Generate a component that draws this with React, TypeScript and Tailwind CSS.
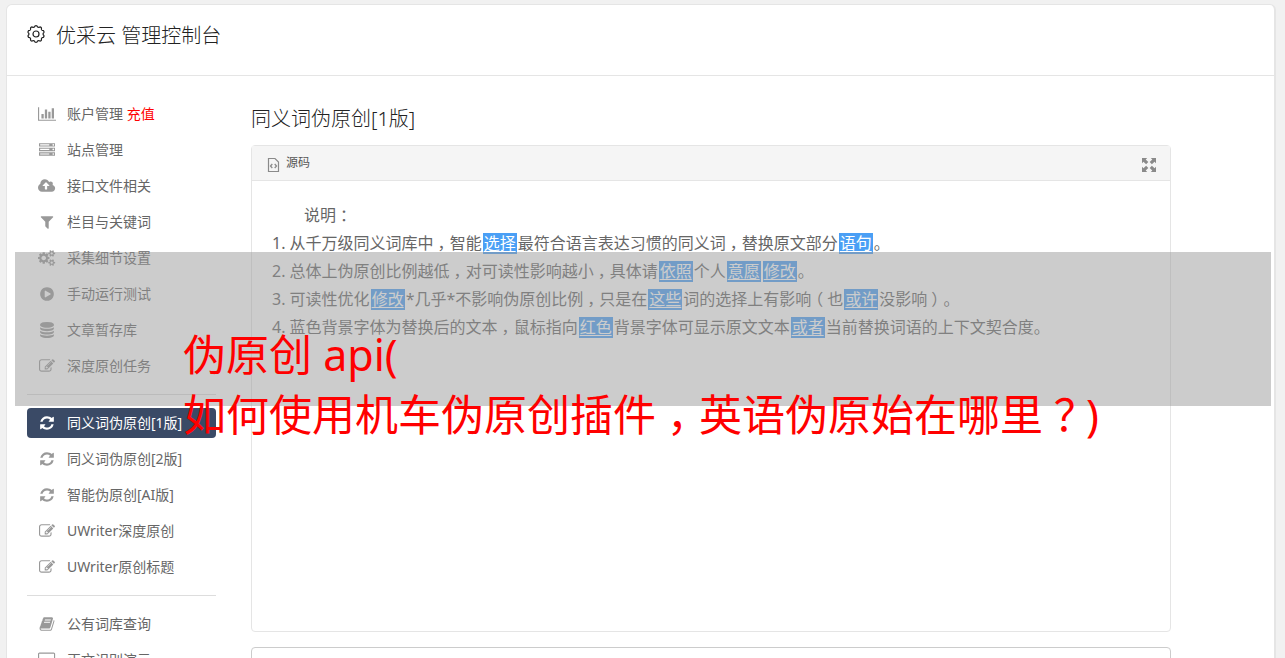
import React from "react";

type IconDef = { w: number; d: string };

const ICONS: Record<string, IconDef> = {
  chart: {
    w: 2048,
    d: "M640 896v512h-256v-512h256zm384-512v1024h-256v-1024h256zm1024 1152v128h-2048v-1536h128v1408h1920zm-640-896v768h-256v-768h256zm384-384v1152h-256v-1152h256z",
  },
  server: {
    w: 1792,
    d: "M128 1408h1024v-128h-1024v128zm0-512h1024v-128h-1024v128zm1568 448q0-40-28-68t-68-28-68 28-28 68 28 68 68 28 68-28 28-68zm-1568-960h1024v-128h-1024v128zm1568 448q0-40-28-68t-68-28-68 28-28 68 28 68 68 28 68-28 28-68zm0-512q0-40-28-68t-68-28-68 28-28 68 28 68 68 28 68-28 28-68zm96 832v384h-1792v-384h1792zm0-512v384h-1792v-384h1792zm0-512v384h-1792v-384h1792z",
  },
  cloud: {
    w: 1920,
    d: "M1280 864q0-14-9-23l-352-352q-9-9-23-9t-23 9l-351 351q-10 12-10 24 0 14 9 23t23 9h224v352q0 13 9.5 22.5t22.5 9.5h192q13 0 22.5-9.5t9.5-22.5v-352h224q13 0 22.5-9.5t9.5-22.5zm640 288q0 159-112.5 271.500t-271.500 112.500h-1088q-185 0-316.500-131.500t-131.500-316.500q0-130 70-240t188-165q-2-30-2-43 0-212 150-362t362-150q156 0 285.500 87t188.500 231q71-62 166-62 106 0 181 75t75 181q0 76-41 138 130 31 213.500 135.500t83.500 238.500z",
  },
  filter: {
    w: 1792,
    d: "M1595 295q17 41-14 70l-493 493v742q0 42-39 59-13 5-25 5-27 0-45-19l-256-256q-19-19-19-45v-486l-493-493q-31-29-14-70 17-39 59-39h1280q42 0 59 39z",
  },
  cogs: {
    w: 1920,
    d: "M896 896q0-106-75-181t-181-75-181 75-75 181 75 181 181 75 181-75 75-181zm768 512q0-52-38-90t-90-38-90 38-38 90q0 53 37.5 90.5t90.5 37.5 90.5-37.5 37.5-90.5zm0-1024q0-52-38-90t-90-38-90 38-38 90q0 53 37.5 90.5t90.5 37.5 90.5-37.5 37.5-90.5zm-384 421v185q0 10-7 19.5t-16 10.5l-155 24q-11 35-32 76 34 48 90 115 7 11 7 20 0 12-7 19-23 30-82.5 89.5t-78.5 59.5q-11 0-21-7l-115-90q-37 19-77 31-11 108-23 155-7 24-30 24h-186q-11 0-20-7.5t-10-17.5l-23-153q-34-10-75-31l-118 89q-7 7-20 7-11 0-21-8-144-133-144-160 0-9 7-19 10-14 41-53t47-61q-23-44-35-82l-152-24q-10-1-17-9.5t-7-19.5v-185q0-10 7-19.5t16-10.5l155-24q11-35 32-76-34-48-90-115-7-11-7-20 0-12 7-20 22-30 82-89t79-59q11 0 21 7l115 90q34-18 77-32 11-108 23-154 7-24 30-24h186q11 0 20 7.5t10 17.5l23 153q34 10 75 31l118-89q8-7 20-7 11 0 21 8 144 133 144 160 0 8-7 19-12 16-42 54t-45 60q23 48 34 82l152 23q10 2 17 10.5t7 19.5zm640 533v140q0 16-149 31-12 27-30 52 51 113 51 138 0 4-4 7-122 71-124 71-8 0-46-47t-52-68q-20 2-30 2t-30-2q-14 21-52 68t-46 47q-2 0-124-71-4-3-4-7 0-25 51-138-18-25-30-52-149-15-149-31v-140q0-16 149-31 13-29 30-52-51-113-51-138 0-4 4-7 4-2 35-20t59-34 30-16q8 0 46 46.5t52 67.5q20-2 30-2t30 2q51-71 92-112l6-2q4 0 124 70 4 3 4 7 0 25-51 138 17 23 30 52 149 15 149 31zm0-1024v140q0 16-149 31-12 27-30 52 51 113 51 138 0 4-4 7-122 71-124 71-8 0-46-47t-52-68q-20 2-30 2t-30-2q-14 21-52 68t-46 47q-2 0-124-71-4-3-4-7 0-25 51-138-18-25-30-52-149-15-149-31v-140q0-16 149-31 13-29 30-52-51-113-51-138 0-4 4-7 4-2 35-20t59-34 30-16q8 0 46 46.5t52 67.5q20-2 30-2t30 2q51-71 92-112l6-2q4 0 124 70 4 3 4 7 0 25-51 138 17 23 30 52 149 15 149 31z",
  },
  play: {
    w: 1792,
    d: "M896 128q209 0 385.5 103t279.5 279.5 103 385.5-103 385.5-279.5 279.5-385.5 103-385.5-103-279.5-279.5-103-385.5 103-385.5 279.5-279.5 385.5-103zm384 823q32-18 32-55t-32-55l-544-320q-31-19-64-1-32 19-32 56v640q0 37 32 56 16 8 32 8 17 0 32-9z",
  },
  database: {
    w: 1792,
    d: "M896 768q237 0 443-43t325-127v170q0 69-103 128t-280 93.5-385 34.5-385-34.5-280-93.5-103-128v-170q119 84 325 127t443 43zm0 768q237 0 443-43t325-127v170q0 69-103 128t-280 93.5-385 34.5-385-34.5-280-93.5-103-128v-170q119 84 325 127t443 43zm0-384q237 0 443-43t325-127v170q0 69-103 128t-280 93.5-385 34.5-385-34.5-280-93.5-103-128v-170q119 84 325 127t443 43zm0-1152q208 0 385 34.5t280 93.5 103 128v128q0 69-103 128t-280 93.5-385 34.5-385-34.5-280-93.5-103-128v-128q0-69 103-128t280-93.5 385-34.5z",
  },
  edit: {
    w: 1792,
    d: "M888 1184l116-116-152-152-116 116v56h96v96h56zm440-720q-16-16-33 1l-350 350q-17 17-1 33t33-1l350-350q17-17 1-33zm80 594v190q0 119-84.5 203.5t-203.5 84.5h-832q-119 0-203.5-84.5t-84.5-203.5v-832q0-119 84.5-203.5t203.5-84.5h832q63 0 117 25 15 7 18 23 3 17-9 29l-49 49q-14 14-32 8-23-6-45-6h-832q-66 0-113 47t-47 113v832q0 66 47 113t113 47h832q66 0 113-47t47-113v-126q0-13 9-22l64-64q15-15 35-7t20 29zm-96-738l288 288-672 672h-288v-288zm444 132l-92 92-288-288 92-92q28-28 68-28t68 28l152 152q28 28 28 68t-28 68z",
  },
  refresh: {
    w: 1792,
    d: "M1639 1056q0 5-1 7-64 268-268 434.5t-478 166.5q-146 0-282.5-55t-243.5-157l-129 129q-19 19-45 19t-45-19-19-45v-448q0-26 19-45t45-19h448q26 0 45 19t19 45-19 45l-137 137q71 66 161 102t187 36q134 0 250-65t186-179q11-17 53-117 8-23 30-23h192q13 0 22.5 9.5t9.5 22.5zm25-800v448q0 26-19 45t-45 19h-448q-26 0-45-19t-19-45 19-45l138-138q-148-137-349-137-134 0-250 65t-186 179q-11 17-53 117-8 23-30 23h-199q-13 0-22.5-9.5t-9.5-22.5v-7q65-268 270-434.5t480-166.5q146 0 284 55.5t245 156.5l130-129q19-19 45-19t45 19 19 45z",
  },
  book: {
    w: 1792,
    d: "M1703 478q40 57 18 129l-275 906q-19 64-76.5 107.5t-122.5 43.5h-923q-77 0-148.5-53.5t-99.5-131.5q-24-67-2-127 0-4 3-27t4-37q1-8-3-21.5t-3-19.5q2-11 8-21t16.5-23.5 16.5-23.5q23-38 45-91.5t30-91.5q3-10 .5-30t-.5-28q3-11 17-28t17-23q21-36 42-92t25-90q1-9-2.5-32t.5-28q4-13 22-30.5t22-22.5q19-26 42.5-84.5t27.5-96.5q1-8-3-25.5t-2-26.5q2-8 9-18t18-23 17-21q8-12 16.5-30.5t15-35 16-36 19.5-32 26.5-23.5 36-11.5 47.500 5.500l-1 3q38-9 51-9h761q74 0 114 56t18 130l-274 906q-36 119-71.5 153.5t-128.5 34.5h-869q-27 0-38 15-11 16-1 43 24 70 144 70h923q29 0 56-15.5t35-41.5l300-987q7-22 5-57 38 15 59 43zm-1064 2q-4 13 2 22.5t20 9.5h608q13 0 25.5-9.5t16.5-22.5l21-64q4-13-2-22.5t-20-9.5h-608q-13 0-25.5 9.5t-16.5 22.5zm-83 256q-4 13 2 22.5t20 9.5h608q13 0 25.5-9.5t16.5-22.5l21-64q4-13-2-22.5t-20-9.5h-608q-13 0-25.5 9.5t-16.5 22.5z",
  },
  desktop: {
    w: 1920,
    d: "M1792 1056v-832q0-13-9.5-22.5t-22.5-9.5h-1600q-13 0-22.5 9.5t-9.5 22.5v832q0 13 9.5 22.5t22.5 9.5h1600q13 0 22.5-9.5t9.5-22.5zm128-832v1088q0 66-47 113t-113 47h-544q0 37 16 77.5t32 71 16 43.500q0 26-19 45t-45 19h-512q-26 0-45-19t-19-45q0-14 16-44t32-70 16-78h-544q-66 0-113-47t-47-113v-1088q0-66 47-113t113-47h1600q66 0 113 47t47 113z",
  },
};

function Icon({ name }: { name: string }) {
  const { w, d } = ICONS[name];
  return (
    <span className="flex w-5 shrink-0 justify-center">
      <svg viewBox={`0 0 ${w} 1792`} className="h-4 w-auto" fill="currentColor" aria-hidden="true">
        <path d={d} />
      </svg>
    </span>
  );
}

function GearIcon() {
  const n = 10;
  const steps = n * 12;
  let d = "";
  for (let i = 0; i < steps; i++) {
    const a = (i / steps) * Math.PI * 2;
    const r = 7.7 + 0.65 * Math.tanh(1.6 * Math.cos(n * a));
    d += `${i ? "L" : "M"}${(9 + r * Math.sin(a)).toFixed(2)} ${(9 - r * Math.cos(a)).toFixed(2)}`;
  }
  return (
    <svg viewBox="0 0 18 18" className="mb-1 size-[18px]" fill="none" stroke="currentColor" strokeWidth="1.2" aria-hidden="true">
      <path d={d + "z"} strokeLinejoin="round" />
      <circle cx="9" cy="9" r="3" />
    </svg>
  );
}

type Item = { icon: string; label: string; extra?: string; active?: boolean };

const GROUPS: Item[][] = [
  [
    { icon: "chart", label: "账户管理", extra: "充值" },
    { icon: "server", label: "站点管理" },
    { icon: "cloud", label: "接口文件相关" },
    { icon: "filter", label: "栏目与关键词" },
    { icon: "cogs", label: "采集细节设置" },
    { icon: "play", label: "手动运行测试" },
    { icon: "database", label: "文章暂存库" },
    { icon: "edit", label: "深度原创任务" },
  ],
  [
    { icon: "refresh", label: "同义词伪原创[1版]", active: true },
    { icon: "refresh", label: "同义词伪原创[2版]" },
    { icon: "refresh", label: "智能伪原创[AI版]" },
    { icon: "edit", label: "UWriter深度原创" },
    { icon: "edit", label: "UWriter原创标题" },
  ],
  [
    { icon: "book", label: "公有词库查询" },
    { icon: "desktop", label: "正文识别演示" },
  ],
];

function NavItem({ item }: { item: Item }) {
  return (
    <li>
      <a
        href="#"
        aria-current={item.active ? "page" : undefined}
        className={
          item.active
            ? "flex h-[30px] items-center gap-[10px] rounded bg-[#3a4a66] px-[10px] text-white"
            : "flex h-[30px] items-center gap-[10px] rounded px-[10px] text-[#999999]"
        }
      >
        <Icon name={item.icon} />
        <span className={item.active ? "whitespace-nowrap" : "whitespace-nowrap text-[#666666]"}>
          {item.label}
          {item.extra && <span className="text-[#ff0000]"> {item.extra}</span>}
        </span>
      </a>
    </li>
  );
}

/* Fullwidth punctuation drawn at half width in the middle of a full cell. */
function Centered({ text }: { text: string }) {
  return (
    <>
      {text.split(/([，：？（）])/).map((part, i) =>
        i % 2 ? (
          <span key={i} className="inline-block w-[1em] text-center [font-feature-settings:'halt']">
            {part}
          </span>
        ) : (
          part
        ),
      )}
    </>
  );
}

/* Words in braces are the ones that have been replaced. */
const NOTES = [
  "从千万级同义词库中，智能{选择}最符合语言表达习惯的同义词，替换原文部分{语句}。",
  "总体上伪原创比例越低，对可读性影响越小，具体请{依照}个人{意愿}{修改}。",
  "可读性优化{修改}*几乎*不影响伪原创比例，只是在{这些}词的选择上有影响（也{或许}没影响）。",
  "蓝色背景字体为替换后的文本，鼠标指向{红色}背景字体可显示原文文本{或者}当前替换词语的上下文契合度。",
];

function Note({ text }: { text: string }) {
  return (
    <>
      {text.split(/[{}]/).map((part, i) =>
        i % 2 ? (
          <span key={i} className="mx-px inline-block h-[21px] bg-[#4a9ff5] px-px leading-[21px] text-white underline underline-offset-2">
            {part}
          </span>
        ) : (
          <Centered key={i} text={part} />
        ),
      )}
    </>
  );
}

export default function App() {
  return (
    <div
      lang="zh-CN"
      className="relative h-screen overflow-hidden bg-[#f1f1f1] pt-1 pr-[9px] pl-[6px] font-['Noto_Sans','Noto_Sans_CJK_SC',sans-serif] text-sm font-normal"
    >
      <div className="min-h-screen rounded-md border border-r-2 border-[#e5e5e5] bg-white">
        <header className="flex h-[71px] items-start border-b border-[#e5e5e5] px-5 pt-4">
          <h1 className="flex items-center gap-[11px] text-xl leading-[30px] font-light text-[#222222]">
            <GearIcon />
            优采云 管理控制台
          </h1>
        </header>
        <div className="flex">
          <nav aria-label="管理菜单" className="w-[209px] shrink-0 pt-[23px] pl-5">
            {GROUPS.map((group, i) => (
              <ul
                key={i}
                className={i ? "mt-[13px] flex flex-col gap-[6px] border-t border-[#dddddd] pt-[13px]" : "flex flex-col gap-[6px]"}
              >
                {group.map((item) => (
                  <NavItem key={item.label} item={item} />
                ))}
              </ul>
            ))}
          </nav>
          <main className="min-w-0 flex-1 pt-7 pr-[103px] pl-[35px]">
            <h2 className="mb-[11px] text-xl leading-[30px] font-light text-[#222222]">同义词伪原创[1版]</h2>
            <section className="rounded border border-[#e5e5e5]">
              <div className="flex h-[35px] items-center justify-between border-b border-[#e5e5e5] bg-[#f5f5f5] px-[14px]">
                <button type="button" className="flex items-center gap-[6px] text-xs text-[#555555]">
                  <svg viewBox="0 0 14 16" className="mt-[3px] h-4 w-[14px]" fill="none" stroke="#8a8a8a" aria-hidden="true">
                    <path d="M2.500 1.500h6.500l3.500 3.500v9.500h-10z" strokeWidth="1.200" />
                    <path d="M6.300 7L4.500 9l1.800 2M8.700 7L10.500 9l-1.800 2" strokeWidth="1.300" />
                  </svg>
                  源码
                </button>
                <button type="button" aria-label="全屏" className="text-[#8a8a8a]">
                  <svg viewBox="0 0 14 14" className="mt-1 size-[14px]" fill="currentColor" aria-hidden="true">
                    <path id="corner" d="M0 0h5.200L3.700 1.500 6.300 4.100 4.100 6.300 1.500 3.700 0 5.200z" />
                    <use href="#corner" transform="rotate(90 7 7)" />
                    <use href="#corner" transform="rotate(180 7 7)" />
                    <use href="#corner" transform="rotate(270 7 7)" />
                  </svg>
                </button>
              </div>
              <div className="min-h-[450px] px-5 pt-5 text-base leading-7 text-[#666666]">
                <p className="h-7 pl-8">
                  <Centered text="说明：" />
                </p>
                <ol>
                  {NOTES.map((note, i) => (
                    <li key={i} className="h-7 whitespace-nowrap">
                      {i + 1}. <Note text={note} />
                    </li>
                  ))}
                </ol>
              </div>
            </section>
            <textarea aria-label="文本" className="mt-[15px] block h-40 w-full resize-none rounded-sm border border-[#cccccc] bg-white" />
          </main>
        </div>
      </div>
      <div className="absolute top-[252px] right-[14px] left-[15px] h-[154px] bg-[#999999]/50" />
      <p className="absolute top-[325px] left-[183px] text-[43px] leading-[60px] font-normal whitespace-nowrap text-[#ff0000]">
        伪原创 api(
        <br />
        <Centered text="如何使用机车伪原创插件，英语伪原始在哪里？" />)
      </p>
    </div>
  );
}
